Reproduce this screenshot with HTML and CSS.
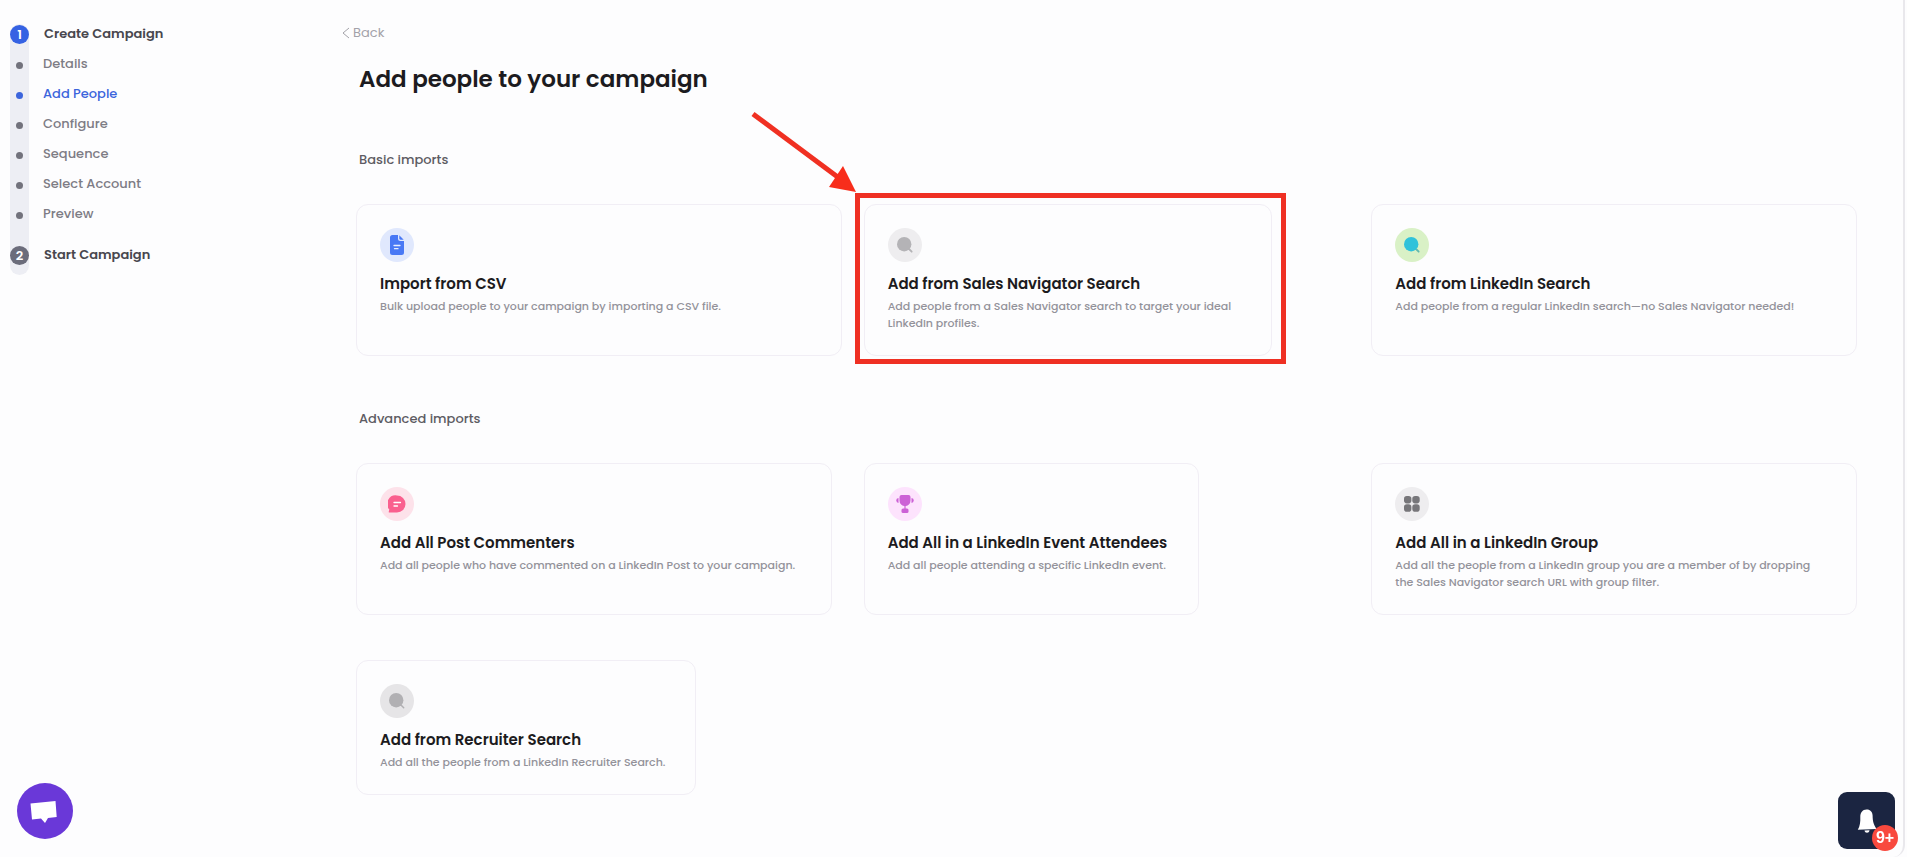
FILE: index.html
```html
<!DOCTYPE html>
<html lang="en">
<head>
<meta charset="utf-8">
<title>Add people to your campaign</title>
<meta name="viewport" content="width=device-width, initial-scale=1">
<link rel="stylesheet" href="styles.css">
</head>
<body>
<div class="app">
  <nav class="steps" aria-label="Campaign steps">
    <div class="step step-main"><span class="num num-active">1</span><a href="#create">Create Campaign</a></div>
    <div class="step"><span class="dot"></span><a href="#details">Details</a></div>
    <div class="step step-current"><span class="dot"></span><a href="#people">Add People</a></div>
    <div class="step"><span class="dot"></span><a href="#configure">Configure</a></div>
    <div class="step"><span class="dot"></span><a href="#sequence">Sequence</a></div>
    <div class="step"><span class="dot"></span><a href="#account">Select Account</a></div>
    <div class="step"><span class="dot"></span><a href="#preview">Preview</a></div>
    <div class="step step-main step-last"><span class="num">2</span><a href="#start">Start Campaign</a></div>
  </nav>

  <main class="content">
    <a class="back" href="#back"><svg width="8" height="12" viewBox="0 0 8 12" fill="none" stroke="currentColor"><path d="M7 1 1 6l6 5"/></svg>Back</a>
    <h1 class="title">Add people to your campaign</h1>

    <h2 class="section">Basic imports</h2>
    <div class="grid">
      <button class="card" type="button">
        <span class="icon icon-blue"><svg width="14" height="20" viewBox="0 0 14 20"><path fill="#4878f5" d="M2.500 0H8v3.500A2.500 2.500 0 0 0 10.500 6H14v11.500a2.500 2.500 0 0 1-2.500 2.500h-9A2.500 2.500 0 0 1 0 17.500v-15A2.500 2.500 0 0 1 2.500 0z"/><path fill="#4878f5" d="M9.300.3 13.700 4.700H10.800A1.500 1.500 0 0 1 9.300 3.200z"/><path stroke="#e8eeff" stroke-width="1.300" stroke-linecap="round" d="M4 10.500h6M4.500 13.700h3.500"/></svg></span>
        <span class="name">Import from CSV</span>
        <span class="desc">Bulk upload people to your campaign by importing a CSV file.</span>
      </button>
      <div class="marked">
        <button class="card card-nav" type="button">
          <span class="icon icon-gray"><svg width="16" height="16" viewBox="0 0 16 16"><circle cx="7.200" cy="7.200" r="7.200" fill="#b4b3b6"/><path stroke="#b4b3b6" stroke-width="1.800" stroke-linecap="round" d="m12 12 2.700 2.700"/></svg></span>
          <span class="name">Add from Sales Navigator Search</span>
          <span class="desc">Add people from a Sales Navigator search to target your ideal LinkedIn profiles.</span>
        </button>
        <div class="marker"></div>
        <svg class="arrow" width="106" height="82" viewBox="0 0 106 82"><path stroke="#f03022" stroke-width="5" d="M2 3 88 67"/><path fill="#f82d1b" d="M92 55 105 81 78 76z"/></svg>
      </div>
      <button class="card" type="button">
        <span class="icon icon-green"><svg width="16" height="16" viewBox="0 0 16 16"><circle cx="7.200" cy="7.200" r="7.200" fill="#30c2da"/><path stroke="#61b8ad" stroke-width="1.800" stroke-linecap="round" d="m12.500 12.500 2.200 2.200"/></svg></span>
        <span class="name">Add from LinkedIn Search</span>
        <span class="desc">Add people from a regular LinkedIn search—no Sales Navigator needed!</span>
      </button>
    </div>

    <h2 class="section">Advanced imports</h2>
    <div class="grid">
      <button class="card card-post" type="button">
        <span class="icon icon-pink"><svg width="18" height="18" viewBox="0 0 18 18"><path fill="#fa5f8e" d="M9 .5A8.500 8.500 0 1 1 9 17.500H1.500A.8.800 0 0 1 .8 16.400L1.300 14.500A8.500 8.500 0 0 1 9 .5z"/><path stroke="#fff" stroke-width="1.300" stroke-linecap="round" d="M6 7.500h6.500M6 11h3.500"/></svg></span>
        <span class="name">Add All Post Commenters</span>
        <span class="desc">Add all people who have commented on a LinkedIn Post to your campaign.</span>
      </button>
      <button class="card card-event" type="button">
        <span class="icon icon-violet"><svg width="18" height="18" viewBox="0 0 18 18" fill="#cc61d6"><path d="M5.500 0h7a2 2 0 0 1 2 2v3.500a5.500 5.500 0 0 1-11 0V2a2 2 0 0 1 2-2z"/><path d="M2.500 3v5A3 3 0 0 1 .2 5.500 2.500 2.500 0 0 1 2.500 3zM15.500 3v5a3 3 0 0 0 2.300-2.500A2.500 2.500 0 0 0 15.500 3z"/><path d="M8.400 10h1.200v4H8.400z"/><rect x="5.500" y="13.500" width="7" height="4.500" rx="1.500"/></svg></span>
        <span class="name">Add All in a LinkedIn Event Attendees</span>
        <span class="desc">Add all people attending a specific LinkedIn event.</span>
      </button>
      <button class="card" type="button">
        <span class="icon icon-gray"><svg width="16" height="16" viewBox="0 0 16 16" fill="#77767a"><rect width="7.400" height="7.400" rx="2.800"/><rect x="8.300" width="7.400" height="7.400" rx="2.800"/><rect y="8.300" width="7.400" height="7.400" rx="2.800"/><rect x="8.300" y="8.300" width="7.400" height="7.400" rx="2.800"/></svg></span>
        <span class="name">Add All in a LinkedIn Group</span>
        <span class="desc">Add all the people from a LinkedIn group you are a member of by dropping the Sales Navigator search URL with group filter.</span>
      </button>
      <button class="card card-recruiter" type="button">
        <span class="icon icon-silver"><svg width="16" height="16" viewBox="0 0 16 16"><circle cx="7.200" cy="7.200" r="7.200" fill="#b1b0b3"/><path stroke="#b1b0b3" stroke-width="1.500" stroke-linecap="round" d="m12 12 2.700 2.700"/></svg></span>
        <span class="name">Add from Recruiter Search</span>
        <span class="desc">Add all the people from a LinkedIn Recruiter Search.</span>
      </button>
    </div>
  </main>
</div>

<button class="chat" type="button" aria-label="Open chat"><svg width="56" height="56" viewBox="0 0 56 56"><path fill="#fff" d="M13.500 20.500 38.500 18l1.200 16-8.700 1-3 5-4-4.500-9 1z"/></svg></button>
<button class="bell" type="button" aria-label="Notifications"><svg width="20" height="24" viewBox="0 0 20 24" fill="#fff"><path d="M9.500.5C13 .3 15.500 2.800 15.600 6.500c.1 6 1 9 3.900 13.500L.8 20.800C3 17 3.500 13 3.300 8 3.200 3.500 5.500.7 9.500.5zM7.500 21.500l5-.3c-.3 1.800-1.200 2.500-2.500 2.500s-2.200-.7-2.500-2.200z"/></svg><span class="badge">9+</span></button>
</body>
</html>
```
FILE: styles.css
```css
* { box-sizing: border-box; }

body {
  margin: 0;
  min-height: 100vh;
  background: #fdfdfe;
  color: #1c1b20;
  font-family: Poppins, Inter, "Open Sans", sans-serif;
}

a { color: inherit; text-decoration: none; }

.app {
  display: flex;
  min-height: 100vh;
  margin-right: 2px;
  border-right: 2px solid #e9e8ec;
  border-bottom-right-radius: 12px;
}

/* Stepper */
.steps {
  position: relative;
  flex: none;
  align-self: flex-start;
  width: 332px;
  margin-top: 24px;
  padding: 0 0 10px 10px;
  font-size: 13px;
  font-weight: 500;
  line-height: 20px;
  color: #7d7c85;
}

.steps::before {
  content: "";
  position: absolute;
  z-index: -1;
  inset: 0 auto 0 10px;
  width: 19px;
  border-radius: 10px;
  background: #edeef4;
}

.step { display: flex; align-items: center; gap: 14px; height: 30px; }

.step-main { height: 20px; margin-bottom: 5px; gap: 15px; font-weight: 600; color: #48474e; }

.step-last { margin: 16px 0 0; }

.step-current { color: #3c65dc; }

.num {
  width: 19px;
  height: 19px;
  border-radius: 50%;
  background: #6b6c7b;
  color: #fff;
  font-size: 13px;
  line-height: 19px;
  text-align: center;
}

.num-active { background: #3562e3; }

.dot { width: 7px; height: 7px; margin: 3px 6px 0; border-radius: 50%; background: #72727c; }

.step-current .dot { background: #3c65dc; }

/* Content */
.content { flex: 1; min-width: 0; padding: 21px 46px 60px 24px; }

.back {
  display: inline-flex;
  align-items: center;
  gap: 3px;
  margin-left: -14px;
  font-size: 13px;
  line-height: 20px;
  color: #a3a2a9;
}

.title {
  margin: 17px 0 0 3px;
  font-size: 23px;
  font-weight: 600;
  line-height: 32px;
}

.section {
  margin: 55px 0 0 3px;
  font-size: 13px;
  font-weight: 500;
  line-height: 20px;
  color: #5d5c63;
}

.grid + .section { margin-top: 53px; }

.grid {
  display: grid;
  grid-template-columns: repeat(3, minmax(0, 1fr));
  gap: 45px 22px;
  margin-top: 34px;
}

.card {
  display: flex;
  flex-direction: column;
  align-items: flex-start;
  width: 100%;
  padding: 23px 28px 23px 23px;
  border: 1px solid #f1eef5;
  border-radius: 12px;
  background: transparent;
  color: inherit;
  font: inherit;
  text-align: left;
  cursor: pointer;
}

.card-nav { width: 84%; height: 100%; }
.card-post { width: 98%; }
.card-event { width: 69%; }
.card-recruiter { width: 70%; }

.icon {
  display: flex;
  align-items: center;
  justify-content: center;
  width: 34px;
  height: 34px;
  margin-bottom: 11px;
  border-radius: 50%;
}

.icon-blue { background: #e0e8fd; }
.icon-gray { background: #eeedef; }
.icon-green { background: #d9f1c6; }
.icon-pink { background: #fde2ea; }
.icon-violet { background: #fde3fd; }
.icon-silver { background: #e6e5e7; }

.name { margin-bottom: 3px; font-size: 15px; font-weight: 600; line-height: 22px; white-space: nowrap; }

.desc { font-size: 11px; font-weight: 500; line-height: 17px; color: #93929a; }

/* Highlight around the Sales Navigator card */
.marked { position: relative; }

.marker {
  position: absolute;
  inset: -11px 13% -8px -9px;
  border: 5px solid #ef3023;
  pointer-events: none;
}

.arrow { position: absolute; top: -93px; left: -113px; pointer-events: none; }

/* Floating buttons */
.chat {
  position: fixed;
  left: 17px;
  bottom: 18px;
  width: 56px;
  height: 56px;
  padding: 0;
  border: 0;
  border-radius: 50%;
  background: #6a38d8;
}

.bell {
  position: fixed;
  right: 12px;
  bottom: 8px;
  display: flex;
  align-items: center;
  justify-content: center;
  width: 57px;
  height: 57px;
  padding: 0;
  border: 0;
  border-radius: 9px;
  background: #1b2541;
}

.badge {
  position: absolute;
  right: -3px;
  bottom: -2px;
  width: 26px;
  height: 26px;
  border-radius: 50%;
  background: #f8493e;
  color: #fff;
  font: 700 16px/26px "Liberation Sans", sans-serif;
}
```
